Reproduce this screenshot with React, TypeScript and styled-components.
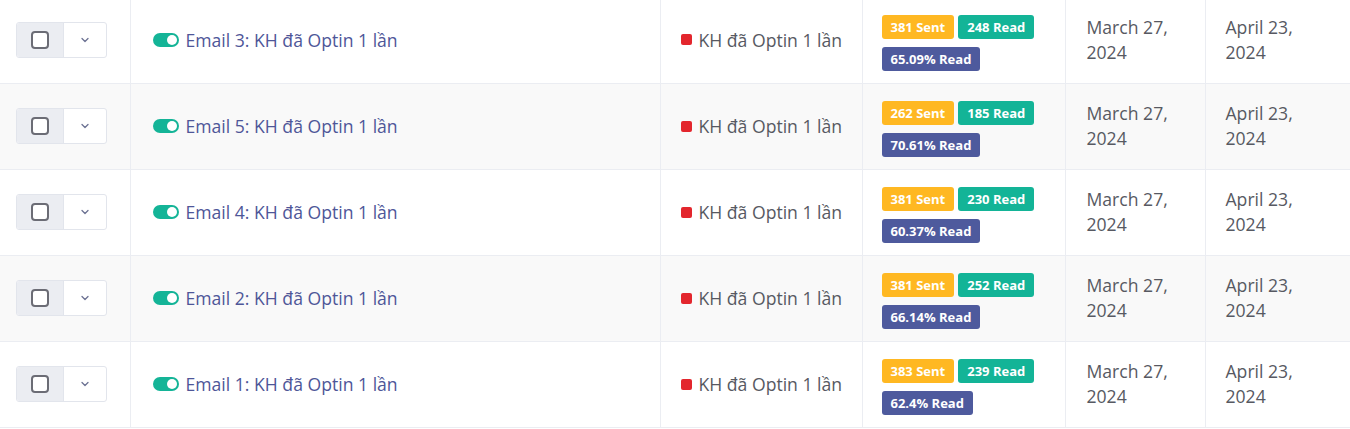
import React from "react";
import styled, { createGlobalStyle } from "styled-components";

const Global = createGlobalStyle`
  html, body { margin: 0; padding: 0; background: #fff; }
  body { font-family: "Open Sans", "Noto Sans", sans-serif; overflow: hidden; }
`;

const Wrap = styled.div`
  margin-top: -3px;
  width: 1350px;
`;

const Table = styled.table`
  width: 1350px;
  border-collapse: collapse;
  table-layout: fixed;
`;

const Row = styled.tr<{ $alt: boolean }>`
  background: ${(p) => (p.$alt ? "#f9f9f9" : "#ffffff")};
  border-bottom: 1px solid #ebedf2;
  height: 86px;
`;

const Cell = styled.td<{ $w: number; $pl: number; $last?: boolean }>`
  width: ${(p) => p.$w}px;
  padding: 0 0 0 ${(p) => p.$pl}px;
  border-right: ${(p) => (p.$last ? "none" : "1px solid #ebedf2")};
  vertical-align: middle;
  box-sizing: border-box;
  color: #575962;
  font-size: 17.6px;
`;

const BtnGroup = styled.div`
  display: flex;
  width: 91px;
  height: 36px;
  border: 1px solid #e2e5ec;
  border-radius: 3px;
  box-sizing: border-box;
  overflow: hidden;
  background: #fff;
`;

const CheckPart = styled.div`
  width: 46px;
  background: #ebedf2;
  border-right: 1px solid #e2e5ec;
  display: flex;
  align-items: center;
  justify-content: center;
`;

const CheckBox = styled.div`
  width: 14px;
  height: 14px;
  border: 2px solid #6b6c75;
  border-radius: 4px;
  background: #fff;
`;

const ChevPart = styled.div`
  flex: 1;
  display: flex;
  align-items: center;
  justify-content: center;
`;

const TitleLine = styled.div`
  display: flex;
  align-items: center;
  gap: 7px;
  color: #4e5698;
  font-size: 17.6px;
  white-space: nowrap;
`;

const Toggle = styled.div`
  width: 26px;
  height: 14px;
  border-radius: 7px;
  background: #14b497;
  position: relative;
  flex: none;
  &::after {
    content: "";
    position: absolute;
    right: 2px;
    top: 2px;
    width: 10px;
    height: 10px;
    border-radius: 50%;
    background: #fff;
  }
`;

const Segment = styled.div`
  display: flex;
  align-items: center;
  gap: 7px;
  white-space: nowrap;
  color: #575962;
`;

const RedDot = styled.span`
  width: 11px;
  height: 11px;
  border-radius: 2px;
  background: #e3262d;
  flex: none;
`;

const Badges = styled.div`
  display: flex;
  flex-wrap: wrap;
  gap: 8px 4px;
  width: 165px;
  margin-top: 6px;
`;

const Badge = styled.span<{ $bg: string }>`
  display: inline-flex;
  align-items: center;
  height: 24px;
  padding: 0 9px;
  border-radius: 3px;
  background: ${(p) => p.$bg};
  color: #fff;
  font-weight: 700;
  font-size: 13px;
  white-space: nowrap;
  box-sizing: border-box;
`;

const DateText = styled.div`
  color: #575962;
  font-size: 17.6px;
  line-height: 25px;
  width: 92px;
`;

const rows = [
  { n: 3, sent: 381, read: 248, pct: "65.09%" },
  { n: 5, sent: 262, read: 185, pct: "70.61%" },
  { n: 4, sent: 381, read: 230, pct: "60.37%" },
  { n: 2, sent: 381, read: 252, pct: "66.14%" },
  { n: 1, sent: 383, read: 239, pct: "62.4%" },
];

const Chevron = () => (
  <svg width="10" height="6" viewBox="0 0 10 6" fill="none">
    <path d="M2 1.5 L5 4.5 L8 1.5" stroke="#6c7293" strokeWidth="1.3" strokeLinecap="round" strokeLinejoin="round" />
  </svg>
);

export default function App() {
  return (
    <Wrap>
      <Global />
      <Table>
        <tbody>
          {rows.map((r, i) => (
            <Row key={r.n} $alt={i % 2 === 1}>
              <Cell $w={130} $pl={16}>
                <BtnGroup>
                  <CheckPart>
                    <CheckBox />
                  </CheckPart>
                  <ChevPart>
                    <Chevron />
                  </ChevPart>
                </BtnGroup>
              </Cell>
              <Cell $w={530} $pl={22}>
                <TitleLine>
                  <Toggle />
                  Email {r.n}: KH đã Optin 1 lần
                </TitleLine>
              </Cell>
              <Cell $w={202} $pl={20}>
                <Segment>
                  <RedDot />
                  KH đã Optin 1 lần
                </Segment>
              </Cell>
              <Cell $w={203} $pl={19}>
                <Badges>
                  <Badge $bg="#ffb822">{r.sent} Sent</Badge>
                  <Badge $bg="#13b497">{r.read} Read</Badge>
                  <Badge $bg="#4e5a9d">{r.pct} Read</Badge>
                </Badges>
              </Cell>
              <Cell $w={140} $pl={21}>
                <DateText>March 27, 2024</DateText>
              </Cell>
              <Cell $w={145} $pl={20} $last>
                <DateText>April 23, 2024</DateText>
              </Cell>
            </Row>
          ))}
        </tbody>
      </Table>
    </Wrap>
  );
}
